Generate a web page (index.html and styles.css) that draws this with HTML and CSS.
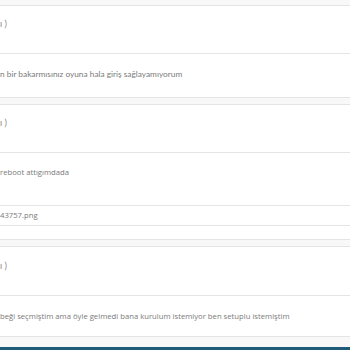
FILE: index.html
```html
<!DOCTYPE html>
<html lang="tr">
<head>
    <meta charset="UTF-8">
    <meta name="viewport" content="width=device-width, initial-scale=1.0">
    <title>Destek</title>
    <link rel="stylesheet" href="styles.css">
</head>
<body>

    <section class="thread">
        <div class="post">
            <div class="post-head">ı )</div>
            <div class="post-body lato">n bir bakarmısınız oyuna hala giriş sağlayamıyorum</div>
        </div>

        <div class="post">
            <div class="post-head">ı )</div>
            <div class="post-body short">reboot attıgımdada</div>
            <div class="post-files">
                <div class="post-file">43757.png</div>
            </div>
        </div>

        <div class="post">
            <div class="post-head tall">ı )</div>
            <div class="post-body last">beği seçmiştim ama öyle gelmedi bana kurulum istemiyor ben setuplu istemiştim</div>
        </div>
    </section>

    <footer class="site-foot"></footer>

</body>
</html>
```

FILE: styles.css
```css
body {
    font-family: "Open Sans", Arial, sans-serif;
    margin: 0;
    padding: 0;
    background-color: #f8f8f8;
    color: #7a7a7a;
    font-size: 7.7px;
}

.thread {
    padding-top: 5px;
    display: flex;
    flex-direction: column;
    gap: 6px;
}

.post {
    background-color: #fff;
    border-top: 1px solid #e4e4e4;
    border-bottom: 1px solid #e4e4e4;
}

.post-head {
    box-sizing: border-box;
    height: 48px;
    padding-top: 12px;
    line-height: 12px;
    font-family: Lato, Arial, sans-serif;
    font-size: 9px;
    color: #8a8a8a;
    border-bottom: 1px solid #e4e4e4;
}

.post-head.tall {
    height: 49px;
    padding-top: 13px;
}

.post-body {
    box-sizing: border-box;
    height: 43px;
    padding-top: 14px;
    line-height: 12px;
}

.post-body.short {
    height: 52px;
    padding-top: 13px;
}

.post-body.last {
    height: 40px;
    padding-top: 14px;
}

.lato {
    font-family: Lato, Arial, sans-serif;
    font-size: 8.3px;
}

.post-files {
    padding-bottom: 13px;
}

.post-file {
    border-top: 1px solid #e4e4e4;
    border-bottom: 1px solid #e4e4e4;
    height: 19px;
    line-height: 19px;
}

.site-foot {
    margin-top: 10px;
    height: 10px;
    background-color: #1d5b78;
}
```
